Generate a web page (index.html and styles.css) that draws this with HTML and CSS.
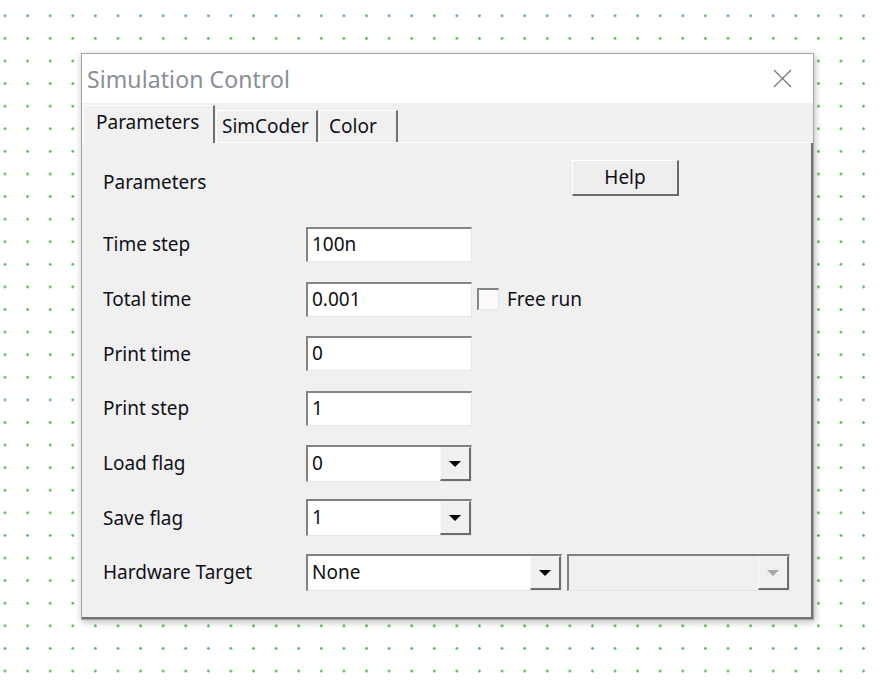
FILE: index.html
```html
<!DOCTYPE html>
<html>
<head>
<meta charset="utf-8">
<title>Simulation Control</title>
<link rel="stylesheet" href="styles.css">
</head>
<body>
<div class="dialog">
  <div class="titlebar">
    <span class="title">Simulation Control</span>
    <svg class="close" width="20" height="20" viewBox="0 0 20 20"><path d="M1 1L19 19M19 1L1 19" stroke="#7c7c7c" stroke-width="1.4" fill="none"/></svg>
  </div>
  <div class="tabs">
    <div class="tab active tab-params">Parameters</div>
    <div class="tab tab-simcoder">SimCoder</div>
    <div class="tab tab-color">Color</div>
  </div>
  <div class="panel">
    <div class="panel-head">
      <span class="label head-label">Parameters</span>
      <div class="button">Help</div>
    </div>
    <div class="form">
      <div class="label">Time step</div>
      <div class="field"><div class="edit">100n</div></div>

      <div class="label">Total time</div>
      <div class="field">
        <div class="edit">0.001</div>
        <div class="checkbox"></div>
        <span class="check-label">Free run</span>
      </div>

      <div class="label">Print time</div>
      <div class="field"><div class="edit">0</div></div>

      <div class="label">Print step</div>
      <div class="field"><div class="edit">1</div></div>

      <div class="label">Load flag</div>
      <div class="field">
        <div class="combo"><span class="combo-text">0</span><span class="combo-btn"><i class="arrow"></i></span></div>
      </div>

      <div class="label">Save flag</div>
      <div class="field">
        <div class="combo"><span class="combo-text">1</span><span class="combo-btn"><i class="arrow"></i></span></div>
      </div>

      <div class="label">Hardware Target</div>
      <div class="field">
        <div class="combo combo-wide"><span class="combo-text">None</span><span class="combo-btn"><i class="arrow"></i></span></div>
        <div class="combo combo-disabled"><span class="combo-text"></span><span class="combo-btn"><i class="arrow"></i></span></div>
      </div>
    </div>
  </div>
</div>
</body>
</html>
```

FILE: styles.css
```css
html {
  background: #ffffff;
}

body {
  margin: 0;
  width: 883px;
  height: 680px;
  overflow: hidden;
  font-family: "Noto Sans", "Open Sans", sans-serif;
  background-color: #ffffff;
  background-image: radial-gradient(circle at center, #5cb85c 0, #5cb85c 1px, rgba(92, 184, 92, 0) 1.6px);
  background-size: 22.6px 22.6px;
  background-position: -6.3px 4.5px;
  padding-top: 53px;
  box-sizing: border-box;
}

.dialog {
  margin-left: 81px;
  width: 733px;
  height: 567px;
  box-sizing: border-box;
  border: 1px solid #a4a4a4;
  background: #f0f0f0;
  display: flex;
  flex-direction: column;
  box-shadow: 1px 2px 7px rgba(0, 0, 0, 0.28);
}

.titlebar {
  height: 49px;
  flex: none;
  background: #ffffff;
  display: flex;
  align-items: center;
  justify-content: space-between;
  padding: 0 21px 0 5px;
}

.title {
  font-family: "Noto Sans", "Open Sans", sans-serif;
  font-size: 23px;
  color: #898e97;
  letter-spacing: 0.1px;
}

.close {
  display: block;
  width: 19px;
  height: 19px;
}

.tabs {
  height: 39px;
  flex: none;
  display: flex;
  align-items: flex-end;
  padding-left: 1px;
  border-bottom: 1px solid #ffffff;
  background: #f0f0f0;
}

.tab {
  box-sizing: border-box;
  font-size: 19px;
  color: #101018;
  background: #f0f0f0;
  border-top: 1px solid #ffffff;
  border-left: 1px solid #ffffff;
  border-right: 2px solid #6f6f6f;
  height: 32px;
  line-height: 30px;
  white-space: nowrap;
}

.tab.active {
  height: 38px;
  line-height: 33px;
  margin-bottom: -1px;
  margin-right: 1px;
}

.tab-params {
  width: 132px;
  padding-left: 12px;
}

.tab-simcoder {
  width: 102px;
  padding-left: 5px;
}

.tab-color {
  width: 79px;
  padding-left: 9px;
  margin-left: 1px;
}

.panel {
  flex: 1;
  background: #f0f0f0;
  border-right: 2px solid #727272;
  border-bottom: 2px solid #727272;
  padding: 17px 0 0 21px;
}

.label {
  font-size: 19px;
  color: #101018;
  white-space: nowrap;
}

.panel-head {
  width: 576px;
  height: 36px;
  display: flex;
  align-items: center;
  justify-content: space-between;
}

.head-label {
  margin-top: 7px;
}

.button {
  box-sizing: border-box;
  width: 107px;
  height: 36px;
  background: #eeeeee;
  border-top: 1px solid #ffffff;
  border-left: 1px solid #ffffff;
  border-right: 2px solid #6a6a6a;
  border-bottom: 2px solid #6a6a6a;
  font-size: 19px;
  color: #101018;
  display: flex;
  align-items: center;
  justify-content: center;
  padding-bottom: 2px;
}

.form {
  margin-top: 21px;
  display: grid;
  grid-template-columns: 203px auto;
  grid-auto-rows: 54.7px;
  align-items: center;
}

.field {
  display: flex;
  align-items: center;
}

.edit {
  box-sizing: border-box;
  width: 166px;
  height: 35px;
  background: #ffffff;
  border-top: 2px solid #848484;
  border-left: 2px solid #848484;
  border-right: 1px solid #e6e6e6;
  border-bottom: 1px solid #e6e6e6;
  padding-left: 4px;
  font-size: 19px;
  line-height: 31px;
  color: #0e0e14;
}

.checkbox {
  box-sizing: border-box;
  width: 22px;
  height: 22px;
  margin-left: 5px;
  background: #fbfbfb;
  border-top: 2px solid #858585;
  border-left: 2px solid #858585;
  border-right: 1px solid #e4e4e4;
  border-bottom: 1px solid #e4e4e4;
}

.check-label {
  margin-left: 8px;
  font-size: 19px;
  color: #101018;
}

.combo {
  box-sizing: border-box;
  width: 166px;
  height: 37px;
  display: flex;
  background: #ffffff;
  border-top: 2px solid #818181;
  border-left: 2px solid #818181;
  border-right: 1px solid #e6e6e6;
  border-bottom: 1px solid #e6e6e6;
}

.combo-wide {
  width: 256px;
}

.combo-disabled {
  width: 223px;
  margin-left: 5px;
  background: #f0f0f0;
}

.combo-text {
  flex: 1;
  padding-left: 4px;
  font-size: 19px;
  line-height: 33px;
  color: #0e0e14;
}

.combo-btn {
  box-sizing: border-box;
  width: 31px;
  background: #f0f0f0;
  border-top: 1px solid #f4f4f4;
  border-left: 1px solid #fafafa;
  border-right: 2px solid #6c6c6c;
  border-bottom: 2px solid #6c6c6c;
  display: flex;
  align-items: center;
  justify-content: center;
}

.arrow {
  width: 0;
  height: 0;
  border-left: 6px solid transparent;
  border-right: 6px solid transparent;
  border-top: 6px solid #000000;
  margin-top: 1px;
}

.combo-disabled .arrow {
  border-top-color: #a8a8a8;
}
```
